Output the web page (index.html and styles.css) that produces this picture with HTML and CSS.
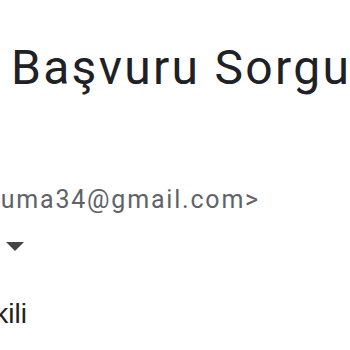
FILE: index.html
```html
<!DOCTYPE html>
<html lang="tr">
<head>
<meta charset="utf-8">
<link rel="stylesheet" href="styles.css">
</head>
<body>
<div class="page">
  <h1 class="subject">Başvuru Sorgulama</h1>
  <div class="sender"><span class="email">&lt;uyduruma34@gmail.com&gt;</span></div>
  <div class="to">
    <svg class="caret" width="20" height="10" viewBox="0 0 20 10"><polygon points="1,0 19,0 10,9" fill="#444"/></svg>
  </div>
  <div class="body-text"><span>Yetkili</span></div>
</div>
</body>
</html>
```
FILE: styles.css
```css
html, body {
  margin: 0;
  padding: 0;
  background: #ffffff;
}
.page {
  width: 350px;
  height: 350px;
  overflow: hidden;
  display: flex;
  flex-direction: column;
  white-space: nowrap;
}
.subject {
  margin: 0;
  padding: 40px 0 0 11px;
  font-family: Roboto, "Noto Sans", sans-serif;
  font-weight: 400;
  font-size: 48px;
  line-height: 56px;
  letter-spacing: 2.3px;
  color: #202124;
}
.sender {
  margin-top: 89px;
  display: flex;
  justify-content: flex-end;
  width: 260px;
  font-family: Roboto, "Liberation Sans", sans-serif;
  font-size: 25px;
  line-height: 30px;
  letter-spacing: 1.8px;
  color: #5f6368;
}
.to {
  margin-top: 27px;
  padding-left: 5px;
  height: 10px;
}
.caret {
  display: block;
}
.body-text {
  margin-top: 46px;
  display: flex;
  justify-content: flex-end;
  width: 27px;
  font-family: "Liberation Sans", Arial, sans-serif;
  font-size: 28px;
  line-height: 32px;
  color: #222222;
}
```
